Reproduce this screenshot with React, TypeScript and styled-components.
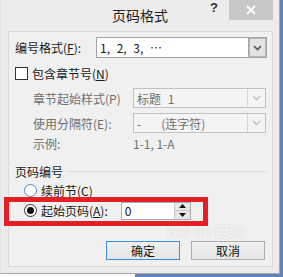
import React, { FC } from 'react';
import styled, { createGlobalStyle, css } from 'styled-components';

const GlobalStyle = createGlobalStyle`
  html, body {
    margin: 0;
    padding: 0;
    width: 283px;
    height: 277px;
    overflow: hidden;
  }
  body {
    background: linear-gradient(to right, #fbfbfb 0 135px, #5f83bd 135px);
    font-family: "Noto Sans CJK SC", "Liberation Sans", sans-serif;
  }
`;

const Window = styled.div`
  position: relative;
  box-sizing: border-box;
  width: 280px;
  height: 274px;
  border: 1px solid #a9a9a9;
  border-top: none;
  border-left-color: #e2e2e2;
  background: #ececec;
  display: flex;
  flex-direction: column;
`;

const TitleBar = styled.div`
  height: 31px;
  display: grid;
  grid-template-columns: 1fr auto 1fr;
  align-items: start;
`;

const Title = styled.div`
  grid-column: 2;
  padding-top: 5px;
  font-size: 14px;
  line-height: 20px;
  color: #222;
`;

const TitleTools = styled.div`
  grid-column: 3;
  display: flex;
  justify-content: flex-end;
  align-items: flex-start;
  padding-right: 6px;
`;

const Help = styled.div`
  font-family: "Liberation Sans", sans-serif;
  font-weight: bold;
  font-size: 13px;
  line-height: 20px;
  color: #333;
  margin-right: 11px;
  margin-top: -2px;
`;

const CloseButton = styled.div`
  width: 44px;
  height: 20px;
  background: #c7c7c7;
  display: flex;
  align-items: center;
  justify-content: center;
`;

const Client = styled.div`
  flex: 1;
  margin: 0 6px 6px 7px;
  border: 1px solid #dadada;
  background: #f0f0f0;
  padding-left: 6px;
  display: flex;
  flex-direction: column;
  font-size: 12px;
  color: #1a1a1a;
`;

const Row = styled.div<{ $top: number; $h: number; $indent?: number }>`
  display: flex;
  align-items: center;
  margin-top: ${(p) => p.$top}px;
  height: ${(p) => p.$h}px;
  padding-left: ${(p) => p.$indent ?? 0}px;
`;

const Label = styled.span<{ $w?: number; $disabled?: boolean }>`
  white-space: pre;
  ${(p) => p.$w && css`width: ${p.$w}px;`}
  color: ${(p) => (p.$disabled ? '#6f6f6f' : '#1a1a1a')};
`;

const Combo = styled.div<{ $w: number; $disabled?: boolean }>`
  box-sizing: border-box;
  width: ${(p) => p.$w}px;
  height: 100%;
  display: flex;
  align-items: center;
  border: 1px solid ${(p) => (p.$disabled ? '#c2c2c2' : '#a4a4a4')};
  background: ${(p) => (p.$disabled ? '#f4f4f4' : '#fff')};
  color: ${(p) => (p.$disabled ? '#6f6f6f' : '#1a1a1a')};
`;

const ComboText = styled.span`
  flex: 1;
  padding-left: 3px;
  white-space: pre;
  word-spacing: 4px;
`;

const DropButton = styled.div<{ $disabled?: boolean }>`
  box-sizing: border-box;
  width: 18px;
  height: 100%;
  display: flex;
  align-items: center;
  justify-content: center;
  border-left: 1px solid ${(p) => (p.$disabled ? '#d6d6d6' : '#a4a4a4')};
  background: ${(p) => (p.$disabled ? '#f4f4f4' : '#e3e3e3')};
  ${(p) => !p.$disabled && css`box-shadow: inset 0 0 0 1px #b8b8b8;`}
`;

const Check = styled.span`
  box-sizing: border-box;
  width: 13px;
  height: 13px;
  border: 1px solid #333;
  background: #fff;
  margin-right: 4px;
`;

const Radio = styled.span<{ $hover?: boolean; $checked?: boolean }>`
  box-sizing: border-box;
  width: 13px;
  height: 13px;
  border-radius: 50%;
  border: 1px solid ${(p) => (p.$hover ? '#3c8ee0' : '#333')};
  background: #fff;
  margin-right: 4px;
  display: flex;
  align-items: center;
  justify-content: center;
  &::after {
    content: '';
    width: 7px;
    height: 7px;
    border-radius: 50%;
    background: ${(p) => (p.$checked ? '#111' : 'transparent')};
  }
`;

const GroupHeader = styled(Row)`
  gap: 4px;
  &::after {
    content: '';
    flex: 1;
    height: 1px;
    background: #dcdcdc;
    margin-right: 5px;
  }
`;

const Spin = styled.div`
  box-sizing: border-box;
  width: 70px;
  height: 18px;
  margin-left: 13px;
  border: 1px solid #abadb3;
  background: #fff;
  display: flex;
`;

const SpinText = styled.span`
  flex: 1;
  padding-left: 3px;
  line-height: 16px;
`;

const SpinButtons = styled.div`
  width: 15px;
  display: flex;
  flex-direction: column;
  border-left: 1px solid #c8c8c8;
`;

const SpinButton = styled.div`
  flex: 1;
  display: flex;
  align-items: center;
  justify-content: center;
  background: #e6e6e6;
  & + & {
    border-top: 1px solid #c8c8c8;
  }
`;

const ButtonRow = styled.div`
  display: flex;
  justify-content: flex-end;
  gap: 11px;
  margin-top: 21px;
  padding-right: 7px;
`;

const Button = styled.div<{ $default?: boolean }>`
  box-sizing: border-box;
  width: 74px;
  height: 19px;
  display: flex;
  align-items: center;
  justify-content: center;
  font-size: 12px;
  color: #111;
  border: 1px solid ${(p) => (p.$default ? '#3c8ee0' : '#acacac')};
  background: linear-gradient(#f0f0f0, #e5e5e5);
`;

const Highlight = styled.div`
  position: absolute;
  left: 3px;
  top: 197px;
  width: 204px;
  height: 29px;
  box-sizing: border-box;
  border: 5px solid #e41f26;
  pointer-events: none;
`;

// faint photo watermark sitting over the dialog
const Watermark = styled.div`
  position: absolute;
  left: 166px;
  top: 223px;
  color: rgba(255, 255, 255, 0.8);
  text-shadow: 0 0 1px rgba(0, 0, 0, 0.2);
  pointer-events: none;
  font-family: "Liberation Sans", "Noto Sans CJK SC", sans-serif;
  font-weight: bold;
  font-size: 15px;
  line-height: 17px;
  letter-spacing: -0.3px;
`;

const Chevron: FC<{ color: string }> = ({ color }) => (
  <svg width="9" height="6" viewBox="0 0 9 6">
    <path d="M1 1 L4.5 4.5 L8 1" fill="none" stroke={color} strokeWidth="1.6" />
  </svg>
);

const Tri: FC<{ up?: boolean }> = ({ up }) => (
  <svg width="7" height="4" viewBox="0 0 7 4">
    <path d={up ? 'M0 4 L3.5 0 L7 4 Z' : 'M0 0 L3.5 4 L7 0 Z'} fill="#111" />
  </svg>
);

const App: FC = () => {
  return (
    <>
      <GlobalStyle />
      <Window>
        <TitleBar>
          <Title>页码格式</Title>
          <TitleTools>
            <Help>?</Help>
            <CloseButton>
              <svg width="10" height="10" viewBox="0 0 10 10">
                <path d="M1 1 L9 9 M9 1 L1 9" stroke="#fff" strokeWidth="1.8" />
              </svg>
            </CloseButton>
          </TitleTools>
        </TitleBar>
        <Client>
          <Row $top={5} $h={21}>
            <Label $w={81}>
              编号格式(<u>F</u>):
            </Label>
            <Combo $w={171}>
              <ComboText>1, 2, 3, …</ComboText>
              <DropButton>
                <Chevron color="#555" />
              </DropButton>
            </Combo>
          </Row>
          <Row $top={6} $h={18}>
            <Check />
            <Label>
              包含章节号(<u>N</u>)
            </Label>
          </Row>
          <Row $top={6} $h={20} $indent={18}>
            <Label $w={100} $disabled>
              章节起始样式(P)
            </Label>
            <Combo $w={133} $disabled>
              <ComboText>标题 1</ComboText>
              <DropButton $disabled>
                <Chevron color="#c4c4c4" />
              </DropButton>
            </Combo>
          </Row>
          <Row $top={5} $h={20} $indent={18}>
            <Label $w={100} $disabled>
              使用分隔符(E):
            </Label>
            <Combo $w={133} $disabled>
              <ComboText>{'-   (连字符)'}</ComboText>
              <DropButton $disabled>
                <Chevron color="#c4c4c4" />
              </DropButton>
            </Combo>
          </Row>
          <Row $top={1} $h={18} $indent={18}>
            <Label $w={100} $disabled>
              示例:
            </Label>
            <Label $disabled>1-1, 1-A</Label>
          </Row>
          <GroupHeader $top={10} $h={18}>
            <Label>页码编号</Label>
          </GroupHeader>
          <Row $top={1} $h={18} $indent={9}>
            <Radio $hover />
            <Label>
              续前节(<u>C</u>)
            </Label>
          </Row>
          <Row $top={2} $h={19} $indent={9}>
            <Radio $checked />
            <Label>
              起始页码(<u>A</u>):
            </Label>
            <Spin>
              <SpinText>0</SpinText>
              <SpinButtons>
                <SpinButton>
                  <Tri up />
                </SpinButton>
                <SpinButton>
                  <Tri />
                </SpinButton>
              </SpinButtons>
            </Spin>
          </Row>
          <ButtonRow>
            <Button $default>确定</Button>
            <Button>取消</Button>
          </ButtonRow>
        </Client>
        <Highlight />
        <Watermark>Bai du 经验</Watermark>
      </Window>
    </>
  );
};

export default App;
